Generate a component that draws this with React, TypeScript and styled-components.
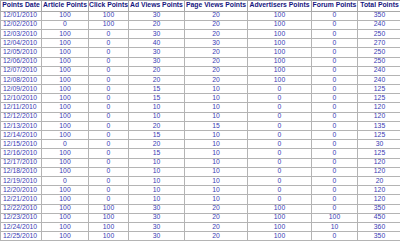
import styled, { createGlobalStyle } from 'styled-components';

const GlobalStyle = createGlobalStyle`
  html, body {
    margin: 0;
    padding: 0;
    background: #ffffff;
    overflow: hidden;
  }
`;

const Sheet = styled.table`
  border-collapse: collapse;
  table-layout: fixed;
  width: 401px;
  font-family: 'Liberation Sans', Arial, sans-serif;
  font-size: 6.8px;
  line-height: 1;
`;

const HeadCell = styled.th`
  height: 9.6px;
  padding: 0;
  border: 1px solid #a8a8a8;
  color: #14147e;
  font-weight: bold;
  text-align: center;
  white-space: nowrap;
  overflow: hidden;
`;

const Cell = styled.td<{ $left?: boolean }>`
  height: 8.2px;
  padding: 0 2px;
  border: 1px solid #b4b4b4;
  color: #3a3ab4;
  text-align: ${(p) => (p.$left ? 'left' : 'center')};
  white-space: nowrap;
  overflow: hidden;
`;

const columns = [
  { title: 'Points Date', width: 41 },
  { title: 'Article Points', width: 47 },
  { title: 'Click Points', width: 40 },
  { title: 'Ad Views Points', width: 56 },
  { title: 'Page Views Points', width: 63 },
  { title: 'Advertisers Points', width: 64 },
  { title: 'Forum Points', width: 46 },
  { title: 'Total Points', width: 44 },
];

// date, article, click, ad views, page views, advertisers, forum, total
const rows: (string | number)[][] = [
  ['12/01/2010', 100, 100, 30, 20, 100, 0, 350],
  ['12/02/2010', 0, 100, 20, 20, 100, 0, 240],
  ['12/03/2010', 100, 0, 30, 20, 100, 0, 250],
  ['12/04/2010', 100, 0, 40, 30, 100, 0, 270],
  ['12/05/2010', 100, 0, 30, 20, 100, 0, 250],
  ['12/06/2010', 100, 0, 30, 20, 100, 0, 250],
  ['12/07/2010', 100, 0, 20, 20, 100, 0, 240],
  ['12/08/2010', 100, 0, 20, 20, 100, 0, 240],
  ['12/09/2010', 100, 0, 15, 10, 0, 0, 125],
  ['12/10/2010', 100, 0, 15, 10, 0, 0, 125],
  ['12/11/2010', 100, 0, 10, 10, 0, 0, 120],
  ['12/12/2010', 100, 0, 10, 10, 0, 0, 120],
  ['12/13/2010', 100, 0, 20, 15, 0, 0, 135],
  ['12/14/2010', 100, 0, 15, 10, 0, 0, 125],
  ['12/15/2010', 0, 0, 20, 10, 0, 0, 30],
  ['12/16/2010', 100, 0, 15, 10, 0, 0, 125],
  ['12/17/2010', 100, 0, 10, 10, 0, 0, 120],
  ['12/18/2010', 100, 0, 10, 10, 0, 0, 120],
  ['12/19/2010', 0, 0, 10, 10, 0, 0, 20],
  ['12/20/2010', 100, 0, 10, 10, 0, 0, 120],
  ['12/21/2010', 100, 0, 10, 10, 0, 0, 120],
  ['12/22/2010', 100, 100, 30, 20, 100, 0, 350],
  ['12/23/2010', 100, 100, 30, 20, 100, 100, 450],
  ['12/24/2010', 100, 100, 30, 20, 100, 10, 360],
  ['12/25/2010', 100, 100, 30, 20, 100, 0, 350],
];

export default function App() {
  return (
    <>
      <GlobalStyle />
      <Sheet>
        <colgroup>
          {columns.map((c) => (
            <col key={c.title} style={{ width: c.width }} />
          ))}
        </colgroup>
        <thead>
          <tr>
            {columns.map((c) => (
              <HeadCell key={c.title}>{c.title}</HeadCell>
            ))}
          </tr>
        </thead>
        <tbody>
          {rows.map((r) => (
            <tr key={r[0]}>
              {r.map((v, i) => (
                <Cell key={i} $left={i === 0}>
                  {v}
                </Cell>
              ))}
            </tr>
          ))}
        </tbody>
      </Sheet>
    </>
  );
}
